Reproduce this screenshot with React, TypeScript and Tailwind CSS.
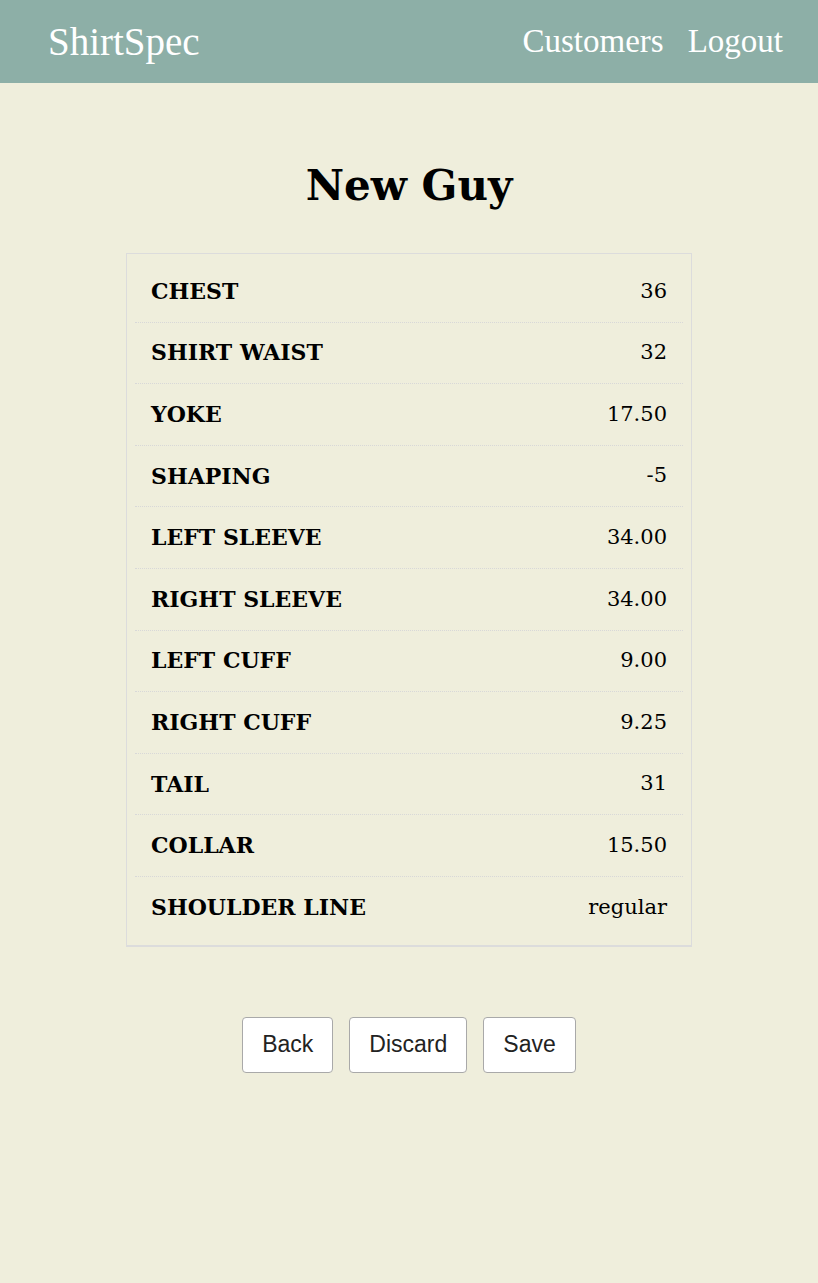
import type { ReactNode } from "react";

const measurements: { label: string; value: string }[] = [
  { label: "CHEST", value: "36" },
  { label: "SHIRT WAIST", value: "32" },
  { label: "YOKE", value: "17.50" },
  { label: "SHAPING", value: "-5" },
  { label: "LEFT SLEEVE", value: "34.00" },
  { label: "RIGHT SLEEVE", value: "34.00" },
  { label: "LEFT CUFF", value: "9.00" },
  { label: "RIGHT CUFF", value: "9.25" },
  { label: "TAIL", value: "31" },
  { label: "COLLAR", value: "15.50" },
  { label: "SHOULDER LINE", value: "regular" },
];

function NavBar() {
  return (
    <header className="flex h-[83px] items-center justify-between bg-[#8dafa7] pl-12 pr-[35px] font-['Liberation_Serif',serif] text-white">
      <a href="#" className="text-[39px] leading-none">
        ShirtSpec
      </a>
      <nav className="flex items-center gap-6 text-[33px] leading-none">
        <a href="#">Customers</a>
        <a href="#">Logout</a>
      </nav>
    </header>
  );
}

function Button({ children }: { children: ReactNode }) {
  return (
    <button
      type="button"
      className="h-[56px] rounded-[4px] border border-[#a9a9a9] bg-white px-[19px] font-['Liberation_Sans',sans-serif] text-[23px] text-[#222]"
    >
      {children}
    </button>
  );
}

export default function App() {
  return (
    <div className="min-h-[1283px] bg-[#efeedc] font-['DejaVu_Serif',serif] text-black">
      <NavBar />
      <main className="flex flex-col items-center pt-[60px]">
        <h1 className="text-[42px] font-bold leading-[86px]">New Guy</h1>
        <section className="mt-[24px] w-[566px] border border-b-2 border-[#dcdcdc] px-2 pt-[7px] pb-[6px]">
          {measurements.map((m, i) => (
            <div
              key={m.label}
              className={`flex h-[61.6px] items-center justify-between px-4 ${
                i < measurements.length - 1 ? "border-b border-dotted border-[#d8d8d8]" : ""
              }`}
            >
              <span className="text-[22px] font-bold">{m.label}</span>
              <span className="text-[21px]">{m.value}</span>
            </div>
          ))}
        </section>
        <div className="mt-[70px] flex gap-4">
          <Button>Back</Button>
          <Button>Discard</Button>
          <Button>Save</Button>
        </div>
      </main>
    </div>
  );
}
